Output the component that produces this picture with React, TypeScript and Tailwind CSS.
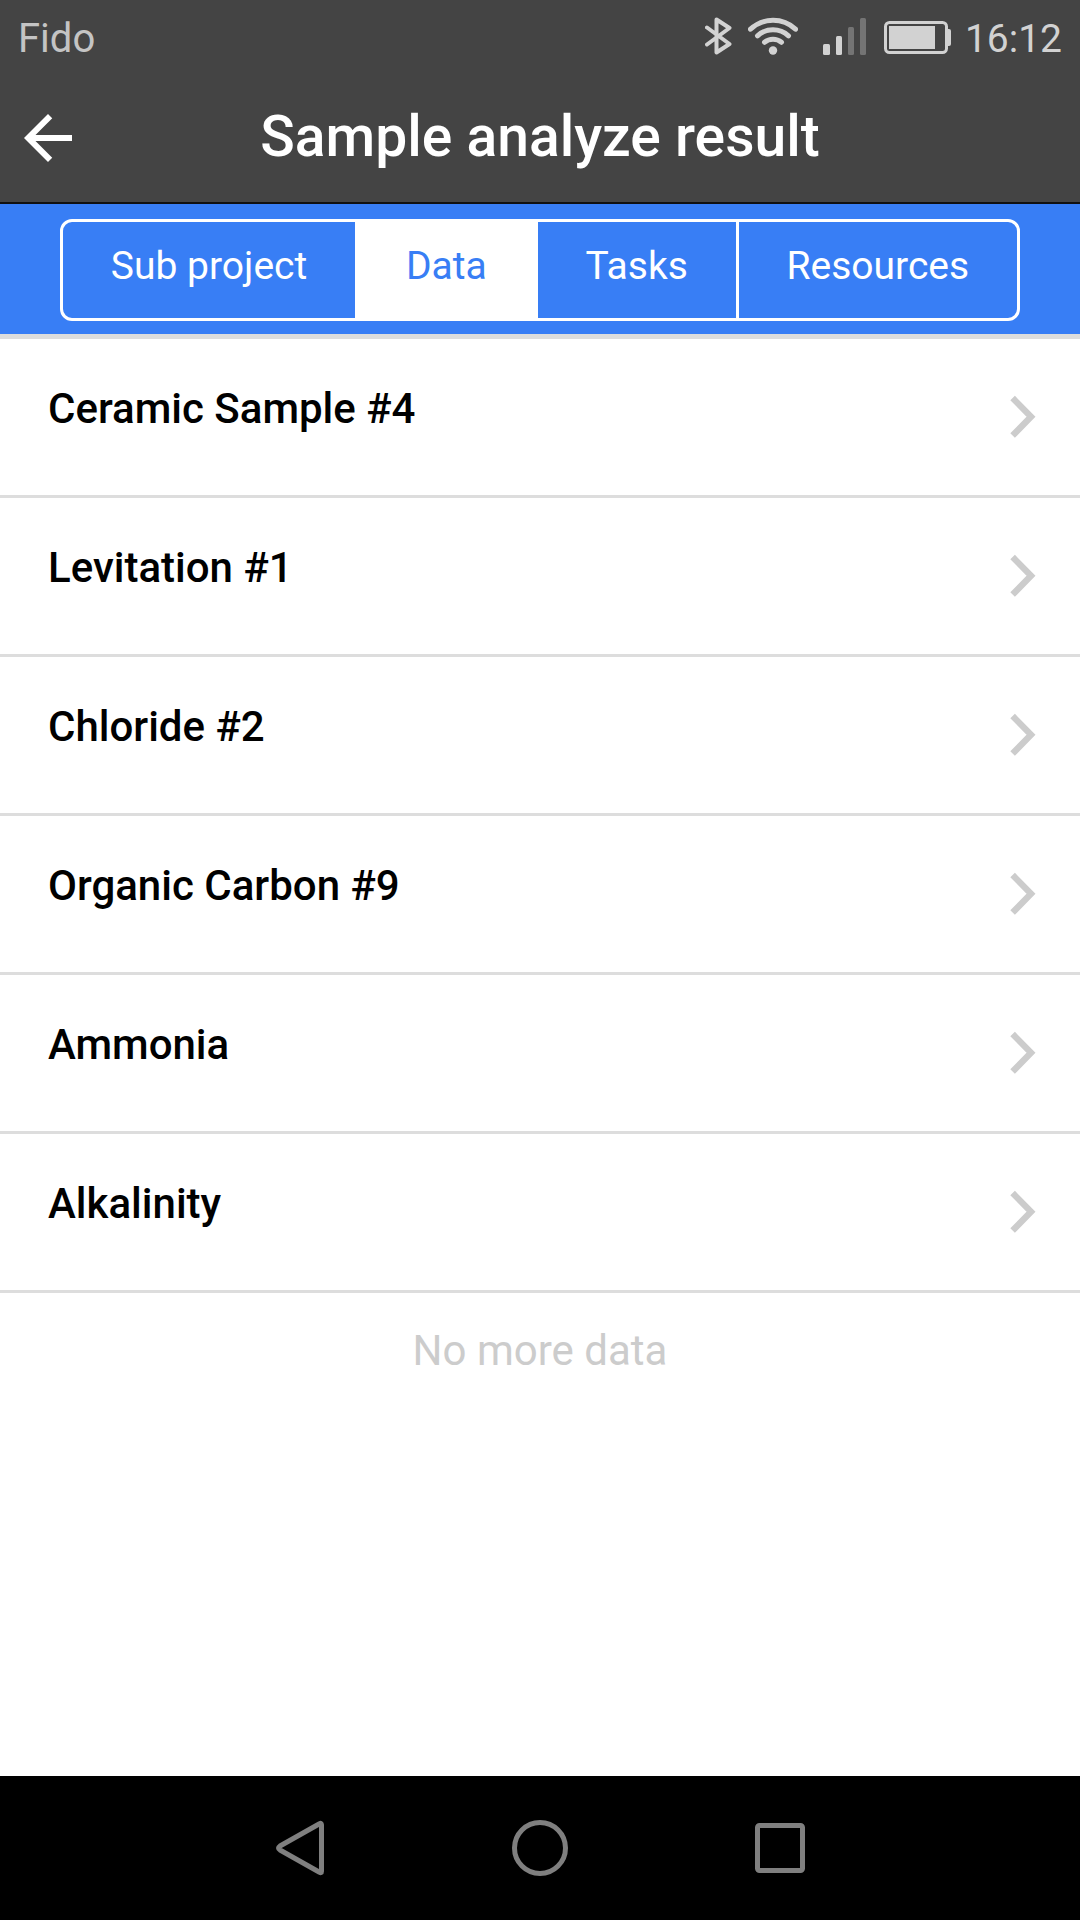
import React from "react";

const samples = [
  "Ceramic Sample #4",
  "Levitation #1",
  "Chloride #2",
  "Organic Carbon #9",
  "Ammonia",
  "Alkalinity",
];

const tabs = ["Sub project", "Data", "Tasks", "Resources"];

function BluetoothIcon() {
  return (
    <svg width="28" height="38" viewBox="0 0 28 38" fill="none" stroke="#d2d2d2" strokeWidth="4" strokeLinejoin="round" strokeLinecap="round" aria-hidden="true">
      <path d="M2 10.5 L24.5 27 L11.5 35.5 V2.5 L24.5 11 L2 27.5" />
    </svg>
  );
}

function WifiIcon() {
  return (
    <svg width="50" height="38" viewBox="0 0 50 38" fill="none" stroke="#d2d2d2" strokeWidth="5" strokeLinecap="round" aria-hidden="true">
      <path d="M2.5 12.2 A33 33 0 0 1 47.5 12.2" />
      <path d="M9.5 18.8 A23 23 0 0 1 40.5 18.8" />
      <path d="M16.5 25.3 A13.5 13.5 0 0 1 33.5 25.3" />
      <circle cx="25" cy="33.5" r="4.2" fill="#d2d2d2" stroke="none" />
    </svg>
  );
}

function SignalIcon() {
  return (
    <svg width="43" height="38" viewBox="0 0 43 38" aria-hidden="true">
      <rect x="0" y="27" width="7" height="11" rx="1.5" fill="#d2d2d2" />
      <rect x="13" y="19" width="6" height="19" rx="1.5" fill="#d2d2d2" />
      <rect x="25" y="10" width="6" height="28" rx="1.5" fill="#747474" />
      <rect x="37" y="1" width="6" height="37" rx="1.5" fill="#747474" />
    </svg>
  );
}

function BatteryIcon() {
  return (
    <svg width="67" height="38" viewBox="0 -4 67 38" aria-hidden="true">
      <rect x="1.5" y="1.5" width="61" height="30" rx="4" fill="none" stroke="#d2d2d2" strokeWidth="3" />
      <path d="M63 8 h2 q2 0 2 2 v13 q0 2 -2 2 h-2 z" fill="#d2d2d2" />
      <rect x="5" y="5" width="46" height="23" fill="#d2d2d2" />
    </svg>
  );
}

function StatusBar() {
  return (
    <div className="flex h-[74px] items-center justify-between px-[18px] pb-0.5 leading-[48px]">
      <span className="pt-1.5 text-[40px] text-[#c4c4c4]">Fido</span>
      <div className="flex items-center text-[39px] text-[#d2d2d2]">
        <BluetoothIcon />
        <span className="ml-[15px]"><WifiIcon /></span>
        <span className="ml-[25px]"><SignalIcon /></span>
        <span className="ml-[18px]"><BatteryIcon /></span>
        <span className="pt-1.5 pl-[14px]">16:12</span>
      </div>
    </div>
  );
}

function TitleBar() {
  return (
    <div className="grid h-32 grid-cols-[96px_1fr_96px] items-center">
      <button type="button" aria-label="Back" className="ml-3 size-[72px]">
        <svg width="72" height="72" viewBox="0 0 24 24" fill="#fff" aria-hidden="true">
          <path d="M20 11H7.83l5.59-5.59L12 4l-8 8 8 8 1.41-1.41L7.83 13H20v-2z" />
        </svg>
      </button>
      <h1 className="pb-0.5 text-center text-[57px] leading-[68px] font-medium text-white">Sample analyze result</h1>
    </div>
  );
}

function Tabs() {
  return (
    <nav className="border-b-[5px] border-[#ddd] bg-[#387ef5] px-[60px] pt-[15px] pb-[13px]">
      <div className="flex overflow-hidden rounded-xl border-[3px] border-white">
        {tabs.map((tab) => (
          <button
            key={tab}
            type="button"
            aria-pressed={tab === "Data"}
            className="flex-auto border-white px-[46px] pt-5 pb-7 text-[39px] leading-[48px] whitespace-nowrap text-white last:border-l-[3px] aria-pressed:border-x-[3px] aria-pressed:bg-white aria-pressed:text-[#387ef5]"
          >
            {tab}
          </button>
        ))}
      </div>
    </nav>
  );
}

function SampleRow({ name }: { name: string }) {
  return (
    <li className="border-b-[3px] border-[#ddd]">
      <button type="button" className="flex w-full items-center justify-between py-[46px] pr-11 pl-12 text-left">
        <span className="pb-4 text-[42px] leading-[48px] font-medium text-black">{name}</span>
        <svg width="26" height="44" viewBox="0 0 26 44" fill="none" stroke="#ccc" strokeWidth="6.4" aria-hidden="true">
          <path d="M2.6 3 L21 21.8 L2.6 40.6" />
        </svg>
      </button>
    </li>
  );
}

function SystemNav() {
  return (
    <nav className="flex h-36 items-center justify-center gap-[180px] bg-black">
      <button type="button" aria-label="System back">
        <svg width="60" height="60" viewBox="0 0 60 60" fill="none" stroke="#7f7f7f" strokeWidth="5" strokeLinejoin="round" aria-hidden="true">
          <path d="M51.5 6.8 Q51.5 4.5 49.5 5.8 L10 28 Q7 30 10 32 L49.5 54.2 Q51.5 55.5 51.5 53.2 Z" />
        </svg>
      </button>
      <button type="button" aria-label="Home">
        <svg width="60" height="60" viewBox="0 0 60 60" fill="none" stroke="#7f7f7f" strokeWidth="5" aria-hidden="true">
          <circle cx="30" cy="30" r="25.5" />
        </svg>
      </button>
      <button type="button" aria-label="Recent apps">
        <svg width="60" height="60" viewBox="0 0 60 60" fill="none" stroke="#7f7f7f" strokeWidth="5" aria-hidden="true">
          <rect x="7.5" y="7.5" width="45" height="45" rx="2" />
        </svg>
      </button>
    </nav>
  );
}

export default function App() {
  return (
    <div className="flex min-h-screen flex-col bg-white font-[Roboto,sans-serif]">
      <header className="border-b-2 border-[#111] bg-[#444]">
        <StatusBar />
        <TitleBar />
      </header>
      <Tabs />
      <main className="flex-1">
        <ul>
          {samples.map((name) => (
            <SampleRow key={name} name={name} />
          ))}
        </ul>
        <p className="pt-[34px] text-center text-[42px] leading-[48px] text-[#ccc]">No more data</p>
      </main>
      <SystemNav />
    </div>
  );
}
